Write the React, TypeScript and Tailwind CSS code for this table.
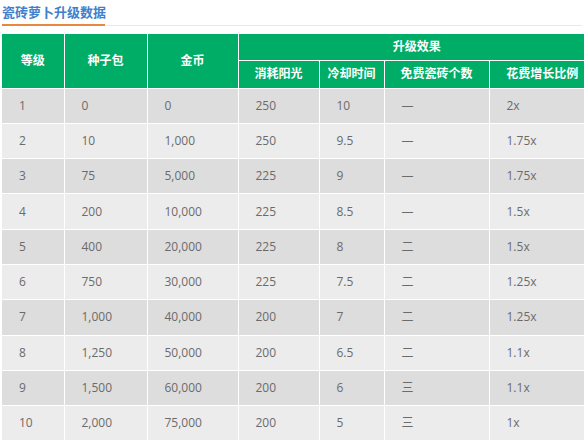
import React from "react"

const rows = [
  ["1", "0", "0", "250", "10", "—", "2x"],
  ["2", "10", "1,000", "250", "9.5", "—", "1.75x"],
  ["3", "75", "5,000", "225", "9", "—", "1.75x"],
  ["4", "200", "10,000", "225", "8.5", "—", "1.5x"],
  ["5", "400", "20,000", "225", "8", "二", "1.5x"],
  ["6", "750", "30,000", "225", "7.5", "二", "1.25x"],
  ["7", "1,000", "40,000", "200", "7", "二", "1.25x"],
  ["8", "1,250", "50,000", "200", "6.5", "二", "1.1x"],
  ["9", "1,500", "60,000", "200", "6", "三", "1.1x"],
  ["10", "2,000", "75,000", "200", "5", "三", "1x"],
]

export default function App() {
  return (
    <div className="w-[584px] h-[440px] overflow-hidden bg-white font-['Open_Sans','Noto_Sans_CJK_SC',sans-serif]">
      {/* title */}
      <div className="px-[2px] pt-[3px]">
        <h2 className="text-[13px] font-bold leading-[18px] text-[#3f80cc]">瓷砖萝卜升级数据</h2>
        <div className="mt-[3px] flex h-[2px]">
          <div className="w-[103px] bg-[#e9863f]" />
          <div className="flex-1 h-px mt-px bg-[#eaeaea]" />
        </div>
      </div>

      <table className="mt-[8px] ml-[2px] border-collapse table-fixed w-[593px] text-[12px]">
        <colgroup>
          <col className="w-[62px]" />
          <col className="w-[83px]" />
          <col className="w-[91px]" />
          <col className="w-[81px]" />
          <col className="w-[65px]" />
          <col className="w-[105px]" />
          <col className="w-[106px]" />
        </colgroup>
        <thead className="bg-[#00ad67] text-white">
          <tr className="h-[26px]">
            <th rowSpan={2} className="border border-white border-t-0 border-l-0 font-bold">等级</th>
            <th rowSpan={2} className="border border-white border-t-0 font-bold">种子包</th>
            <th rowSpan={2} className="border border-white border-t-0 font-bold">金币</th>
            <th colSpan={4} className="border border-white border-t-0 border-r-0 font-bold">升级效果</th>
          </tr>
          <tr className="h-[28px]">
            <th className="border border-white font-bold">消耗阳光</th>
            <th className="border border-white font-bold">冷却时间</th>
            <th className="border border-white font-bold">免费瓷砖个数</th>
            <th className="border border-white border-r-0 font-bold whitespace-nowrap">花费增长比例</th>
          </tr>
        </thead>
        <tbody className="text-[#6b6b6b]">
          {rows.map((r, i) => (
            <tr key={i} className={`h-[35.3px] ${i % 2 === 0 ? "bg-[#dddddd]" : "bg-[#ececec]"}`}>
              {r.map((c, j) => (
                <td
                  key={j}
                  className={`border border-white pl-[17px] ${j === 0 ? "border-l-0" : ""} ${j === 6 ? "border-r-0" : ""}`}
                >
                  {c}
                </td>
              ))}
            </tr>
          ))}
        </tbody>
      </table>
    </div>
  )
}
